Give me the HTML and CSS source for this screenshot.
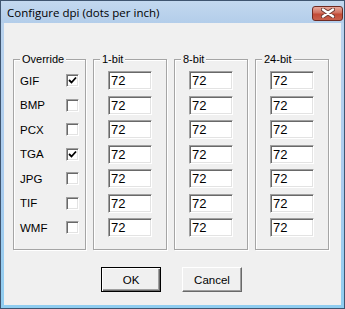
FILE: index.html
```html
<html>
<head>
<link rel="stylesheet" href="styles.css">
</head>
<body>
<div class="window">
  <div class="titlebar">
    <span class="title">Configure dpi (dots per inch)</span>
    <span class="close">
      <svg width="14" height="10" viewBox="0 0 14 10">
        <path d="M2 1.5 L12 8.5 M12 1.5 L2 8.5" stroke="#6a3a34" stroke-width="4.2" stroke-linecap="round"/>
        <path d="M2 1.5 L12 8.5 M12 1.5 L2 8.5" stroke="#ffffff" stroke-width="2.4" stroke-linecap="round"/>
      </svg>
    </span>
  </div>

  <div class="client">
    <div class="groups">
      <fieldset class="group override">
        <legend>Override</legend>
        <div class="row"><span class="lbl">GIF</span><span class="check"><svg width="9" height="9" viewBox="0 0 9 9"><path d="M1 4 L3.5 6.5 L8 1.5" stroke="#000" stroke-width="1.8" fill="none"/></svg></span></div>
        <div class="row"><span class="lbl">BMP</span><span class="check"></span></div>
        <div class="row"><span class="lbl">PCX</span><span class="check"></span></div>
        <div class="row"><span class="lbl">TGA</span><span class="check"><svg width="9" height="9" viewBox="0 0 9 9"><path d="M1 4 L3.5 6.5 L8 1.5" stroke="#000" stroke-width="1.8" fill="none"/></svg></span></div>
        <div class="row"><span class="lbl">JPG</span><span class="check"></span></div>
        <div class="row"><span class="lbl">TIF</span><span class="check"></span></div>
        <div class="row"><span class="lbl">WMF</span><span class="check"></span></div>
      </fieldset>

      <fieldset class="group">
        <legend>1-bit</legend>
        <div class="row"><input class="edit" value="72"></div>
        <div class="row"><input class="edit" value="72"></div>
        <div class="row"><input class="edit" value="72"></div>
        <div class="row"><input class="edit" value="72"></div>
        <div class="row"><input class="edit" value="72"></div>
        <div class="row"><input class="edit" value="72"></div>
        <div class="row"><input class="edit" value="72"></div>
      </fieldset>

      <fieldset class="group">
        <legend>8-bit</legend>
        <div class="row"><input class="edit" value="72"></div>
        <div class="row"><input class="edit" value="72"></div>
        <div class="row"><input class="edit" value="72"></div>
        <div class="row"><input class="edit" value="72"></div>
        <div class="row"><input class="edit" value="72"></div>
        <div class="row"><input class="edit" value="72"></div>
        <div class="row"><input class="edit" value="72"></div>
      </fieldset>

      <fieldset class="group">
        <legend>24-bit</legend>
        <div class="row"><input class="edit" value="72"></div>
        <div class="row"><input class="edit" value="72"></div>
        <div class="row"><input class="edit" value="72"></div>
        <div class="row"><input class="edit" value="72"></div>
        <div class="row"><input class="edit" value="72"></div>
        <div class="row"><input class="edit" value="72"></div>
        <div class="row"><input class="edit" value="72"></div>
      </fieldset>
    </div>

    <div class="buttons">
      <button class="btn default">OK</button>
      <button class="btn">Cancel</button>
    </div>
  </div>
</div>
</body>
</html>
```

FILE: styles.css
```css
body{
    margin: 0;
    background: #f0f0f0;
}

.window{
    box-sizing: border-box;
    width: 345px;
    height: 309px;
    border: 1px solid #3f5570;
    padding: 0 3px 3px 3px;
    background: linear-gradient(to bottom, #bcd4ee, #a9cbee 60%, #8fcdf0);
    display: flex;
    flex-direction: column;
}

.titlebar{
    height: 22px;
    margin: 0 -3px;
    padding: 0 0 0 6px;
    display: flex;
    align-items: center;
    background: linear-gradient(to bottom, #c3d8ef, #b3cdea);
}

.title{
    font-family: "Open Sans", "Noto Sans", sans-serif;
    font-size: 11.5px;
    color: #000;
    padding-top: 1px;
}

.close{
    margin-left: auto;
    margin-right: 1px;
    margin-top: 2px;
    box-sizing: border-box;
    width: 31px;
    height: 15px;
    border: 1px solid #6e2a22;
    border-radius: 3px;
    background: linear-gradient(to bottom, #e8a99d, #d0705f 45%, #c24a36 55%, #c8604c);
    display: flex;
    align-items: center;
    justify-content: center;
}

.client{
    flex: 1;
    background: #f0f0f0;
    padding: 30px 0 0 9px;
    font-family: "Liberation Sans", Arial, sans-serif;
    font-size: 11px;
    color: #000;
}

.groups{
    display: flex;
    gap: 7px;
}

.group{
    box-sizing: border-box;
    width: 74px;
    margin: 0;
    padding: 5px 0 12px 0;
    border: 1px solid #a5a5a5;
    box-shadow: inset 1px 1px 0 #fff, 1px 1px 0 #fff;
    display: flex;
    flex-direction: column;
    gap: 5.5px;
}

.group.override{
    width: 73px;
}

.group legend{
    margin-left: 6px;
    padding: 0 2px;
    line-height: 13px;
    background: #f0f0f0;
}

.row{
    height: 19px;
    display: flex;
    align-items: center;
    padding-left: 14px;
}

.override .row{
    padding-left: 6px;
}

.lbl{
    width: 46px;
    font-size: 11.5px;
}

.check{
    box-sizing: border-box;
    width: 13px;
    height: 13px;
    background: #fff;
    border-top: 1px solid #a0a0a0;
    border-left: 1px solid #a0a0a0;
    border-right: 1px solid #fff;
    border-bottom: 1px solid #fff;
    box-shadow: inset 1px 1px 0 #696969, inset -1px -1px 0 #e3e3e3;
    display: flex;
    align-items: center;
    justify-content: center;
}

.edit{
    box-sizing: border-box;
    width: 44px;
    height: 19px;
    margin: 0;
    padding: 0 0 0 2px;
    background: #fff;
    border-top: 1px solid #a0a0a0;
    border-left: 1px solid #a0a0a0;
    border-right: 1px solid #fff;
    border-bottom: 1px solid #fff;
    box-shadow: inset 1px 1px 0 #696969, inset -1px -1px 0 #e3e3e3;
    font-family: "Liberation Sans Narrow", "Liberation Sans", Arial, sans-serif;
    font-size: 13px;
    color: #000;
    outline: none;
}

.buttons{
    display: flex;
    justify-content: center;
    gap: 21px;
    margin: 17px 0 0 -9px;
    padding-right: 2px;
}

.btn{
    box-sizing: border-box;
    width: 60px;
    height: 25px;
    margin: 0;
    padding: 0;
    background: #f0f0f0;
    border-top: 1px solid #fff;
    border-left: 1px solid #fff;
    border-right: 1px solid #696969;
    border-bottom: 1px solid #696969;
    box-shadow: inset -1px -1px 0 #a0a0a0;
    font-family: "Liberation Sans", Arial, sans-serif;
    font-size: 11.5px;
    color: #000;
}

.btn.default{
    border: 1px solid #000;
    box-shadow: inset 1px 1px 0 #fff, inset -1px -1px 0 #696969, inset -2px -2px 0 #a0a0a0;
}
```
